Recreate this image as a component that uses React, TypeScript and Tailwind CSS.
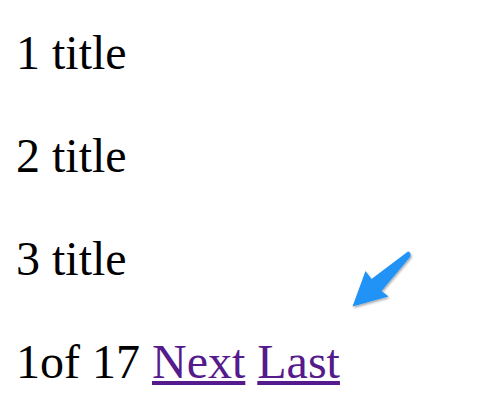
export default function App() {
  const serif = { fontFamily: '"Liberation Serif", "Times New Roman", serif' };
  return (
    <div className="relative w-[500px] h-[415px] bg-white overflow-hidden" style={serif}>
      <div className="flex flex-col gap-[48px] pl-[16px] pt-[25px] text-[48px] leading-[55px] text-black">
        <p>1 title</p>
        <p>2 title</p>
        <p>3 title</p>
        <p>
          1of 17{" "}
          <a href="#" className="text-[#551a8b] underline">Next</a>{" "}
          <a href="#" className="text-[#551a8b] underline">Last</a>
        </p>
      </div>
      <svg
        className="absolute left-0 top-0"
        width="500"
        height="415"
        viewBox="0 0 500 415"
      >
        <defs>
          <filter id="sh" x="-20%" y="-20%" width="140%" height="140%">
            <feDropShadow dx="1" dy="1.5" stdDeviation="1.2" floodColor="#000" floodOpacity="0.35" />
          </filter>
        </defs>
        <path
          d="M408 251.5 Q411 252 410.5 256.5 L381.5 291 L388.5 296.5 L352.5 306.5 L365.5 271 L371.5 279 Z"
          fill="#2193f6"
          filter="url(#sh)"
        />
      </svg>
    </div>
  );
}
